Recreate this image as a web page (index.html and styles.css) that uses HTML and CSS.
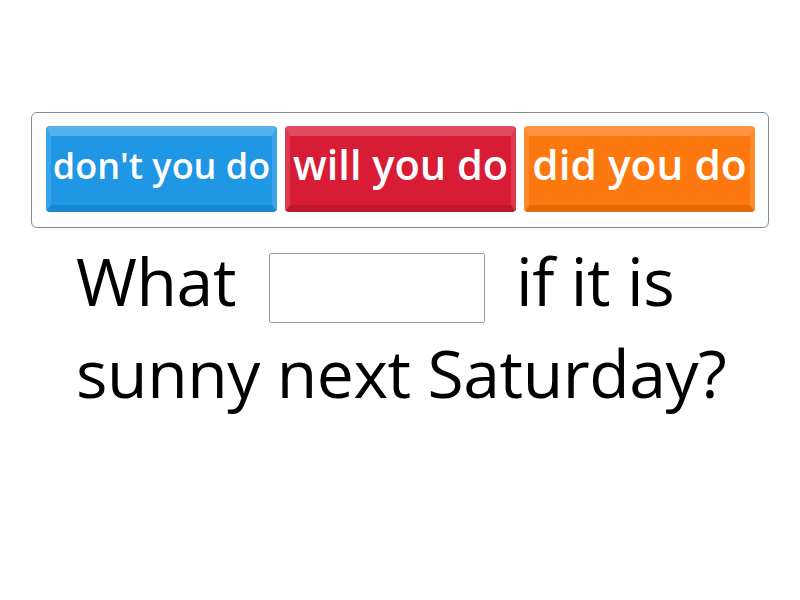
FILE: index.html
```html
<!DOCTYPE html>
<html>
<head>
<meta charset="utf-8">
<link rel="stylesheet" href="styles.css">
</head>
<body>
<div class="page">
  <div class="bank">
    <div class="tile blue fit-a"><span>don't you do</span></div>
    <div class="tile red fit-b"><span>will you do</span></div>
    <div class="tile orange fit-c"><span>did you do</span></div>
  </div>
  <div class="question">
    <div class="line"><span class="w1">What</span><span class="blank"></span><span>if it is</span></div>
    <div class="line">sunny next Saturday?</div>
  </div>
</div>
</body>
</html>
```
FILE: styles.css
```css
html, body { margin: 0; padding: 0; background: #fff; }
body { font-family: "Open Sans", sans-serif; width: 800px; height: 600px; overflow: hidden; }
.page { padding: 112px 31px 0 31px; }
.bank {
  display: flex;
  gap: 8px;
  border: 1px solid #8a8a8a;
  border-radius: 6px;
  padding: 13px 13px 13px 14px;
  box-sizing: border-box;
  height: 116px;
}
.tile {
  flex: 0 0 231px;
  height: 86px;
  border-radius: 4px;
  display: flex;
  align-items: center;
  justify-content: center;
  color: #fff;
  font-weight: 600;
  font-size: 36px;
  box-sizing: border-box;
  border-top: 10px solid;
  border-bottom: 7px solid;
  border-left: 5px solid;
  border-right: 5px solid;
  white-space: nowrap;
}
.tile span { position: relative; top: -5px; }
.fit-a { font-size: 36px; }
.fit-b { font-size: 41.5px; }
.fit-b span, .fit-c span { top: -7px; }
.fit-c { font-size: 42.4px; }
.blue { background: #1f97e4; border-color: #55b1ee #3aa4ea #1787d0 #3aa4ea; }
.red { background: #d81c36; border-color: #e24c61 #dd3850 #bc182f #dd3850; }
.orange { background: #fd780e; border-color: #fe9442 #fe8a2e #e46a05 #fe8a2e; }
.question {
  font-size: 66px;
  letter-spacing: -0.4px;
  line-height: 92px;
  color: #000;
  padding-left: 45px;
  margin-top: 6px;
}
.line { display: flex; align-items: flex-start; white-space: nowrap; }
.w1 { margin-right: 33px; }
.blank {
  display: block;
  width: 216px;
  height: 70px;
  margin-top: 19px;
  border: 1px solid #9a9a9a;
  border-radius: 2px;
  box-sizing: border-box;
  margin-right: 31px;
}
```
